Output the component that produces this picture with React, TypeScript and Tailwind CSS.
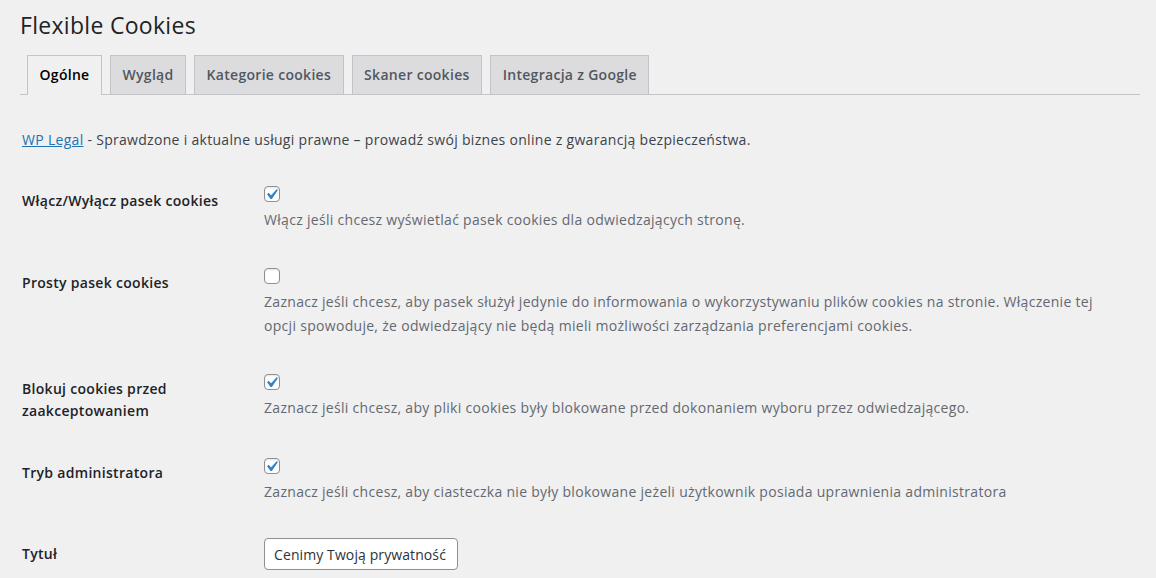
import { useState } from 'react';

const tabs = ['Ogólne', 'Wygląd', 'Kategorie cookies', 'Skaner cookies', 'Integracja z Google'];

const Checkbox = ({ checked, onChange }: { checked: boolean; onChange: () => void }) => (
  <button
    type="button"
    onClick={onChange}
    className="relative block w-[16px] h-[16px] rounded-[4px] border border-[#8c8f94] bg-white shadow-[inset_0_1px_2px_rgba(0,0,0,0.1)]"
  >
    {checked && (
      <svg viewBox="0 0 20 20" className="absolute left-[-4px] top-[-3px] w-[21px] h-[21px]">
        <path d="M14.83 4.89l1.34.94-5.81 8.38H9.02L5.78 9.67l1.34-1.25 2.57 2.4z" fill="#3582c4" />
      </svg>
    )}
  </button>
);

const Row = ({ label, checked, onToggle, desc }: { label: string; checked: boolean; onToggle: () => void; desc: string }) => (
  <div className="flex mt-[36px] first:mt-0">
    <div className="w-[242px] shrink-0 pr-[10px] pt-[4px] font-semibold leading-[22px] text-[#1d2327]">{label}</div>
    <div className="flex-1 pr-[16px]">
      <Checkbox checked={checked} onChange={onToggle} />
      <p className="mt-[6px] leading-[24px] text-[#646970]">{desc}</p>
    </div>
  </div>
);

export default function App() {
  const [active, setActive] = useState(0);
  const [opts, setOpts] = useState([true, false, true, true]);
  const [title, setTitle] = useState('Cenimy Twoją prywatność');

  const toggle = (i: number) => setOpts(o => o.map((v, j) => (j === i ? !v : v)));

  const rows = [
    { label: 'Włącz/Wyłącz pasek cookies', desc: 'Włącz jeśli chcesz wyświetlać pasek cookies dla odwiedzających stronę.' },
    { label: 'Prosty pasek cookies', desc: 'Zaznacz jeśli chcesz, aby pasek służył jedynie do informowania o wykorzystywaniu plików cookies na stronie. Włączenie tej opcji spowoduje, że odwiedzający nie będą mieli możliwości zarządzania preferencjami cookies.' },
    { label: 'Blokuj cookies przed zaakceptowaniem', desc: 'Zaznacz jeśli chcesz, aby pliki cookies były blokowane przed dokonaniem wyboru przez odwiedzającego.' },
    { label: 'Tryb administratora', desc: 'Zaznacz jeśli chcesz, aby ciasteczka nie były blokowane jeżeli użytkownik posiada uprawnienia administratora' },
  ];

  return (
    <div className="min-h-screen bg-[#f0f0f1] font-['Open_Sans',sans-serif] text-[14px] tracking-[0.3px] text-[#3c434a]">
      <div className="pl-[20px] pr-[16px]">
        <h1 className="pt-[10px] text-[23px] leading-[30px] font-normal text-[#1d2327]">Flexible Cookies</h1>

        <nav className="mt-[15px] flex items-end gap-[8px] pl-[7px] border-b border-[#c3c4c7]">
          {tabs.map((t, i) => (
            <button
              key={t}
              onClick={() => setActive(i)}
              className={
                i === active
                  ? 'relative -mb-px px-[11.5px] pt-[7px] pb-[8px] leading-[24px] font-semibold border border-b-0 border-[#c3c4c7] bg-[#f0f0f1] text-black'
                  : 'px-[11.5px] py-[7px] leading-[24px] font-semibold border border-b-0 border-[#c3c4c7] bg-[#dcdcde] text-[#50575e]'
              }
            >
              {t}
            </button>
          ))}
        </nav>

        <div className="pl-[2px]">
          <p className="mt-[34px] leading-[21px]">
            <a href="#" className="text-[#2271b1] underline">WP Legal</a> - Sprawdzone i aktualne usługi prawne – prowadź swój biznes online z gwarancją bezpieczeństwa.
          </p>

          <div className="mt-[36px]">
            {rows.map((r, i) => (
              <Row key={r.label} label={r.label} desc={r.desc} checked={opts[i]} onToggle={() => toggle(i)} />
            ))}
            <div className="flex items-center mt-[34px]">
              <div className="w-[242px] shrink-0 pr-[10px] font-semibold leading-[22px] text-[#1d2327]">Tytuł</div>
              <input
                value={title}
                onChange={e => setTitle(e.target.value)}
                className="w-[194px] h-[32px] px-[9px] rounded-[4px] border border-[#8c8f94] bg-white text-[#2c3338] tracking-[0.1px] outline-none"
              />
            </div>
          </div>
        </div>
      </div>
    </div>
  );
}
